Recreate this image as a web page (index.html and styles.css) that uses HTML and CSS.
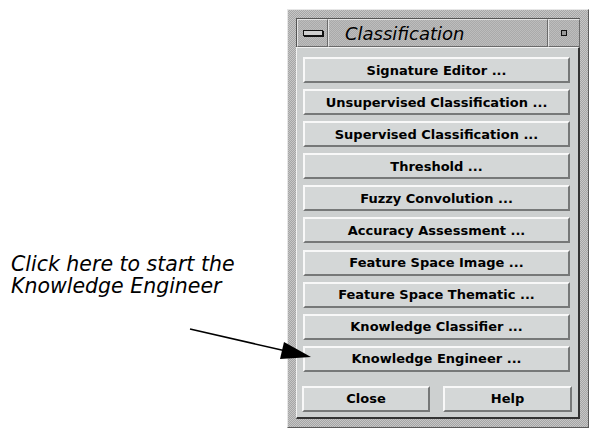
FILE: index.html
```html
<!DOCTYPE html>
<html>
<head>
<meta charset="utf-8">
<link rel="stylesheet" href="styles.css">
</head>
<body>
<div class="page">
  <div class="note">
    <p>Click here to start the<br>Knowledge Engineer</p>
  </div>
  <div class="window">
    <div class="titlebar">
      <div class="tb-btn tb-menu"><span class="menu-bar"></span></div>
      <div class="tb-title">Classification</div>
      <div class="tb-btn tb-min"><span class="min-dot"></span></div>
    </div>
    <div class="client">
      <div class="list">
        <button class="btn">Signature Editor ...</button>
        <button class="btn">Unsupervised Classification ...</button>
        <button class="btn">Supervised Classification ...</button>
        <button class="btn">Threshold ...</button>
        <button class="btn">Fuzzy Convolution ...</button>
        <button class="btn">Accuracy Assessment ...</button>
        <button class="btn">Feature Space Image ...</button>
        <button class="btn">Feature Space Thematic ...</button>
        <button class="btn">Knowledge Classifier ...</button>
        <button class="btn">Knowledge Engineer ...</button>
      </div>
      <div class="actions">
        <button class="btn btn-close">Close</button>
        <button class="btn btn-help">Help</button>
      </div>
    </div>
  </div>
  <svg class="arrow" width="589" height="438" viewBox="0 0 589 438">
    <line x1="190" y1="329" x2="286" y2="351" stroke="#000" stroke-width="1.5"/>
    <polygon points="284,342 280,359 311,357" fill="#000"/>
  </svg>
</div>
</body>
</html>
```
FILE: styles.css
```css
html, body {
  margin: 0;
  padding: 0;
  background: #fff;
}
body {
  width: 589px;
  height: 438px;
  overflow: hidden;
}
.page {
  position: relative;
  display: flex;
  align-items: flex-start;
  width: 589px;
  height: 438px;
}
.note {
  width: 276px;
  padding-left: 11px;
  padding-top: 253px;
  font-family: "DejaVu Sans", sans-serif;
  font-style: italic;
  font-size: 20.5px;
  line-height: 22px;
  color: #000;
}
.note p {
  margin: 0;
  white-space: nowrap;
}
.window {
  margin-top: 9px;
  width: 302px;
  height: 419px;
  box-sizing: border-box;
  border-top: 1px solid #e6e6e6;
  border-left: 1px solid #e6e6e6;
  border-right: 1px solid #5a5a5a;
  border-bottom: 1px solid #5a5a5a;
  background: repeating-conic-gradient(#a6a6a6 0 25%, #c6c6c6 0 50%) 0 0 / 2px 2px;
  padding: 8px 8px 8px 8px;
  display: flex;
  flex-direction: column;
}
.titlebar {
  display: flex;
  height: 29px;
  box-sizing: border-box;
  border-top: 1px solid #555;
  border-left: 1px solid #555;
  background: repeating-conic-gradient(#aaaaaa 0 25%, #bdbdbd 0 50%) 0 0 / 2px 2px;
}
.tb-btn, .tb-title {
  box-sizing: border-box;
  border-top: 1px solid #e4e4e4;
  border-left: 1px solid #e4e4e4;
  border-right: 1px solid #6a6a6a;
  border-bottom: 1px solid #6a6a6a;
  display: flex;
  align-items: center;
}
.tb-menu {
  width: 31px;
  justify-content: center;
}
.menu-bar {
  display: block;
  width: 18px;
  height: 4px;
  border: 1px solid #111;
  background: #cfcfcf;
  box-shadow: 1px 1px 0 #111;
}
.tb-title {
  flex: 1;
  padding-left: 16px;
  font-family: "DejaVu Sans", sans-serif;
  font-style: italic;
  font-size: 18px;
  color: #000;
}
.tb-min {
  width: 32px;
  justify-content: center;
}
.min-dot {
  display: block;
  width: 4px;
  height: 4px;
  border: 1px solid #111;
  background: #9a9a9a;
}
.client {
  flex: 1;
  box-sizing: border-box;
  background: #cdd0d0;
  border-top: 1px solid #f2f2f2;
  border-left: 1px solid #f2f2f2;
  border-right: 2px solid #333;
  border-bottom: 2px solid #333;
  padding: 9px 7px 0 6px;
  display: flex;
  flex-direction: column;
}
.list {
  display: flex;
  flex-direction: column;
  gap: 6.1px;
  padding-right: 1px;
}
.btn {
  display: block;
  height: 26px;
  box-sizing: border-box;
  margin: 0;
  padding: 0;
  background: #d4d7d7;
  border-top: 2px solid #f8f8f8;
  border-left: 2px solid #f8f8f8;
  border-right: 2px solid #767878;
  border-bottom: 2px solid #767878;
  font-family: "DejaVu Sans", sans-serif;
  font-weight: bold;
  font-size: 13px;
  color: #000;
  text-align: center;
  line-height: 21px;
  white-space: nowrap;
}
.actions {
  display: flex;
  justify-content: space-between;
  margin-top: 14px;
  padding-left: 0;
}
.btn-close {
  width: 128px;
  margin-left: -1px;
}
.btn-help {
  width: 129px;
  margin-right: -1px;
}
.arrow {
  position: absolute;
  left: 0;
  top: 0;
  pointer-events: none;
}
```
